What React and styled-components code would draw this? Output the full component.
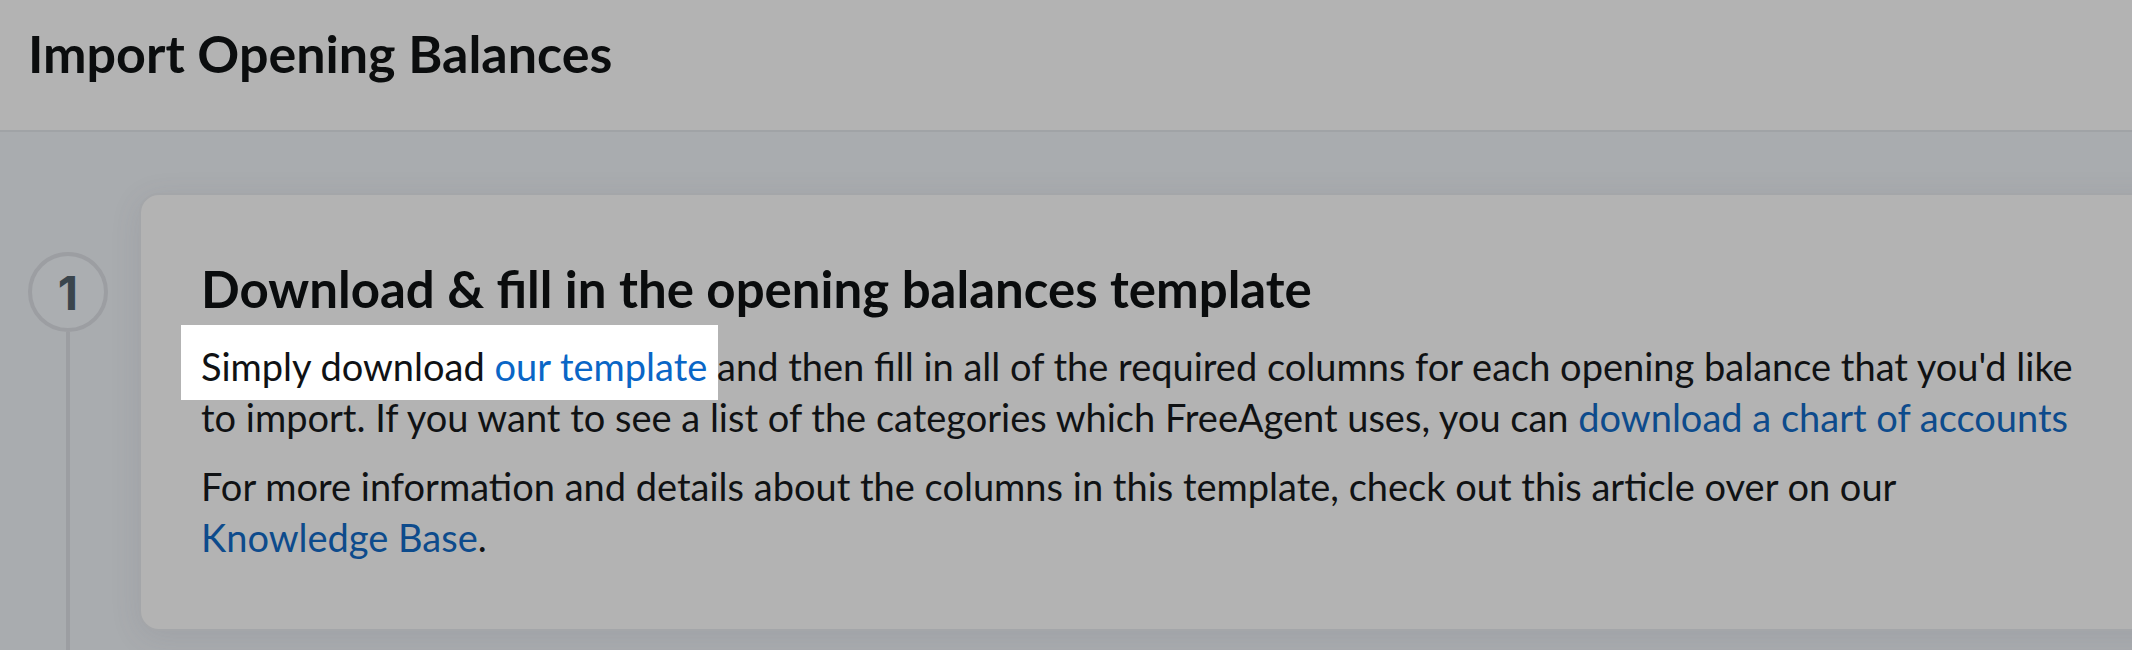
import React from 'react'
import styled, { createGlobalStyle } from 'styled-components'

const GlobalStyle = createGlobalStyle`
  html, body {
    margin: 0;
    padding: 0;
    background: #a9acaf;
    font-family: Lato, "Liberation Sans", sans-serif;
    overflow: hidden;
  }
`
const Page = styled.div`
  width: 2132px;
  height: 650px;
  overflow: hidden;
  background: #a9acaf;
`
const Header = styled.header`
  height: 132px;
  box-sizing: border-box;
  background: #b3b3b3;
  border-bottom: 2px solid #a0a3a6;
  padding: 22px 0 0 28px;
`
const Title = styled.h1`
  margin: 0;
  font-size: 52px;
  line-height: 1.2;
  font-weight: 700;
  color: #0b0d0e;
`
const Main = styled.main`
  padding: 61px 0 0 28px;
`
const Step = styled.section`
  display: flex;
  gap: 31px;
  align-items: stretch;
`
const Rail = styled.div`
  display: flex;
  flex-direction: column;
  align-items: center;
  width: 80px;
  flex-shrink: 0;
`
const Marker = styled.div`
  margin-top: 59px;
  width: 80px;
  height: 80px;
  box-sizing: border-box;
  border: 4px solid #9c9ea2;
  border-radius: 50%;
  display: flex;
  align-items: center;
  justify-content: center;
  font-family: Inter, "Liberation Sans", sans-serif;
  font-size: 47px;
  line-height: 1;
  font-weight: 700;
  color: #3a454d;
  background: #abaeb1;
`
const Line = styled.div`
  flex: 1;
  width: 4px;
  background: #9c9ea2;
`
const Card = styled.div`
  width: 2060px;
  flex-shrink: 0;
  margin-bottom: 60px;
  background: #b3b3b3;
  border: 2px solid #a4a6a9;
  border-radius: 20px;
  box-shadow: 0 6px 30px rgba(80, 85, 95, 0.12);
  padding: 63px 0 66px 60px;
  box-sizing: border-box;
`
const Heading = styled.h2`
  margin: 0 0 22px;
  font-size: 51px;
  line-height: 1.2;
  font-weight: 700;
  color: #0a0c0d;
`
const Text = styled.p`
  margin: 0 0 18px;
  max-width: 1874px;
  font-size: 38px;
  line-height: 51px;
  color: #101214;
  &:last-child {
    margin-bottom: 0;
  }
`
const Link = styled.a`
  color: #0d4b8c;
  text-decoration: none;
`
const Spotlight = styled.span`
  background: #ffffff;
  padding: 18px 11px 11px 20px;
  margin-left: -20px;
  margin-right: -11px;
  ${Link} {
    color: #0a66c6;
  }
`

const App = () => (
  <Page>
    <GlobalStyle />
    <Header>
      <Title>Import Opening Balances</Title>
    </Header>
    <Main>
      <Step>
        <Rail>
          <Marker>1</Marker>
          <Line />
        </Rail>
        <Card>
          <Heading>Download &amp; fill in the opening balances template</Heading>
          <Text>
            <Spotlight>Simply download <Link href="#">our template</Link></Spotlight> and then fill in all of the
            required columns for each opening balance that you'd like to import. If you want to see a list of the
            categories which FreeAgent uses, you can <Link href="#">download a chart of accounts</Link>
          </Text>
          <Text>
            For more information and details about the columns in this template, check out this article over on our{' '}
            <Link href="#">Knowledge Base</Link>.
          </Text>
        </Card>
      </Step>
    </Main>
  </Page>
)

export default App
